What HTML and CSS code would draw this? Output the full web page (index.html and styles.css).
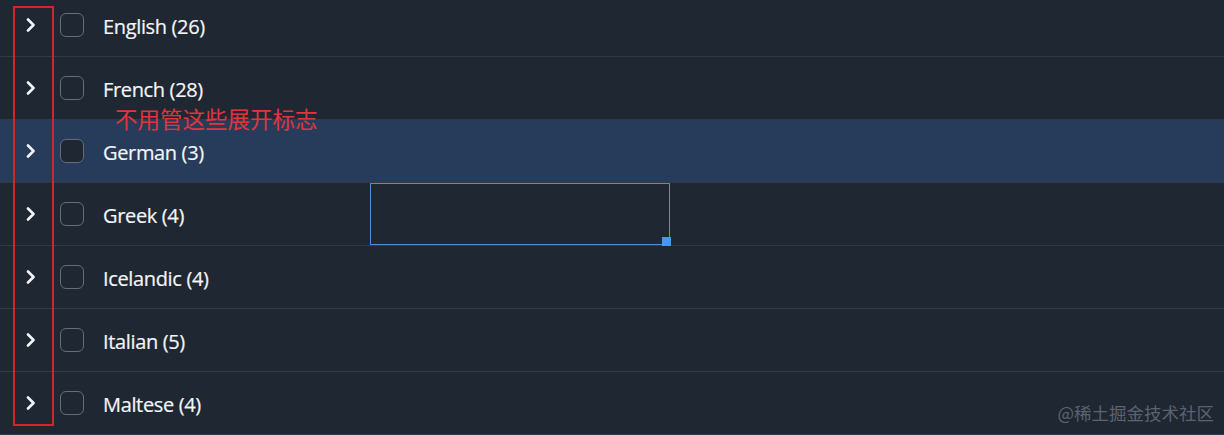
FILE: index.html
```html
<!DOCTYPE html>
<html lang="zh">
<head>
<meta charset="utf-8">
<link rel="stylesheet" href="styles.css">
</head>
<body>
<div class="page">
  <ul class="tree">
    <li class="row"><span class="chev"><svg width="12" height="14" viewBox="0 0 12 14"><path d="M3 1.5 L8.5 7 L3 12.5" fill="none" stroke="#f1f3f6" stroke-width="2.6" stroke-linecap="round" stroke-linejoin="round"/></svg></span><span class="box"></span><span class="label">English (26)</span></li>
    <li class="row"><span class="chev"><svg width="12" height="14" viewBox="0 0 12 14"><path d="M3 1.5 L8.5 7 L3 12.5" fill="none" stroke="#f1f3f6" stroke-width="2.6" stroke-linecap="round" stroke-linejoin="round"/></svg></span><span class="box"></span><span class="label">French (28)</span></li>
    <li class="row active"><span class="chev"><svg width="12" height="14" viewBox="0 0 12 14"><path d="M3 1.5 L8.5 7 L3 12.5" fill="none" stroke="#f1f3f6" stroke-width="2.6" stroke-linecap="round" stroke-linejoin="round"/></svg></span><span class="box"></span><span class="label">German (3)</span></li>
    <li class="row"><span class="chev"><svg width="12" height="14" viewBox="0 0 12 14"><path d="M3 1.5 L8.5 7 L3 12.5" fill="none" stroke="#f1f3f6" stroke-width="2.6" stroke-linecap="round" stroke-linejoin="round"/></svg></span><span class="box"></span><span class="label">Greek (4)</span></li>
    <li class="row"><span class="chev"><svg width="12" height="14" viewBox="0 0 12 14"><path d="M3 1.5 L8.5 7 L3 12.5" fill="none" stroke="#f1f3f6" stroke-width="2.6" stroke-linecap="round" stroke-linejoin="round"/></svg></span><span class="box"></span><span class="label">Icelandic (4)</span></li>
    <li class="row"><span class="chev"><svg width="12" height="14" viewBox="0 0 12 14"><path d="M3 1.5 L8.5 7 L3 12.5" fill="none" stroke="#f1f3f6" stroke-width="2.6" stroke-linecap="round" stroke-linejoin="round"/></svg></span><span class="box"></span><span class="label">Italian (5)</span></li>
    <li class="row"><span class="chev"><svg width="12" height="14" viewBox="0 0 12 14"><path d="M3 1.5 L8.5 7 L3 12.5" fill="none" stroke="#f1f3f6" stroke-width="2.6" stroke-linecap="round" stroke-linejoin="round"/></svg></span><span class="box"></span><span class="label">Maltese (4)</span></li>
  </ul>
  <div class="mark-box"></div>
  <div class="note">不用管这些展开标志</div>
  <div class="selection"><span class="handle"></span></div>
  <div class="watermark">@稀土掘金技术社区</div>
</div>
</body>
</html>
```
FILE: styles.css
```css
* { box-sizing: border-box; }
html, body { margin: 0; padding: 0; }
body {
  background: #1f2733;
  width: 1224px;
  height: 435px;
  overflow: hidden;
  font-family: "Open Sans", "Noto Sans", "Noto Sans CJK SC", sans-serif;
}
.page {
  position: relative;
  display: flow-root;
  width: 1224px;
  height: 435px;
}
.tree {
  list-style: none;
  margin: -6px 0 0 0;
  padding: 0;
}
.row {
  display: flex;
  align-items: center;
  height: 63px;
  border-bottom: 1px solid #323a47;
  padding-left: 25px;
}
.row.active {
  background: #263c5a;
}
.chev {
  display: flex;
  width: 12px;
  height: 14px;
}
.box {
  width: 24px;
  height: 24px;
  border: 1.5px solid #666d78;
  border-radius: 6px;
  margin-left: 23px;
  background: transparent;
}
.active .box { background: #1f2733; }
.label {
  margin-left: 19px;
  padding-top: 2px;
  color: #f4f5f7;
  font-size: 20px;
  letter-spacing: -0.35px;
  -webkit-text-stroke: 0.2px #f4f5f7;
}
.mark-box {
  position: absolute;
  left: 13px;
  top: 6px;
  width: 41px;
  height: 420px;
  border: 2px solid #d8232a;
}
.note {
  position: absolute;
  left: 115px;
  top: 103px;
  font-family: "Noto Sans CJK SC", sans-serif;
  font-size: 22.5px;
  line-height: 30px;
  color: #e0353b;
}
.selection {
  position: absolute;
  left: 370px;
  top: 183px;
  width: 300px;
  height: 62px;
  border: 1px solid #4d8fd8;
}
.handle {
  position: absolute;
  right: -2px;
  bottom: -2px;
  width: 9px;
  height: 9px;
  background: #4a97f2;
}
.watermark {
  position: absolute;
  right: 10px;
  top: 401px;
  font-family: "Noto Sans CJK SC", sans-serif;
  font-size: 17.5px;
  line-height: 24px;
  color: #5b6370;
}
```
